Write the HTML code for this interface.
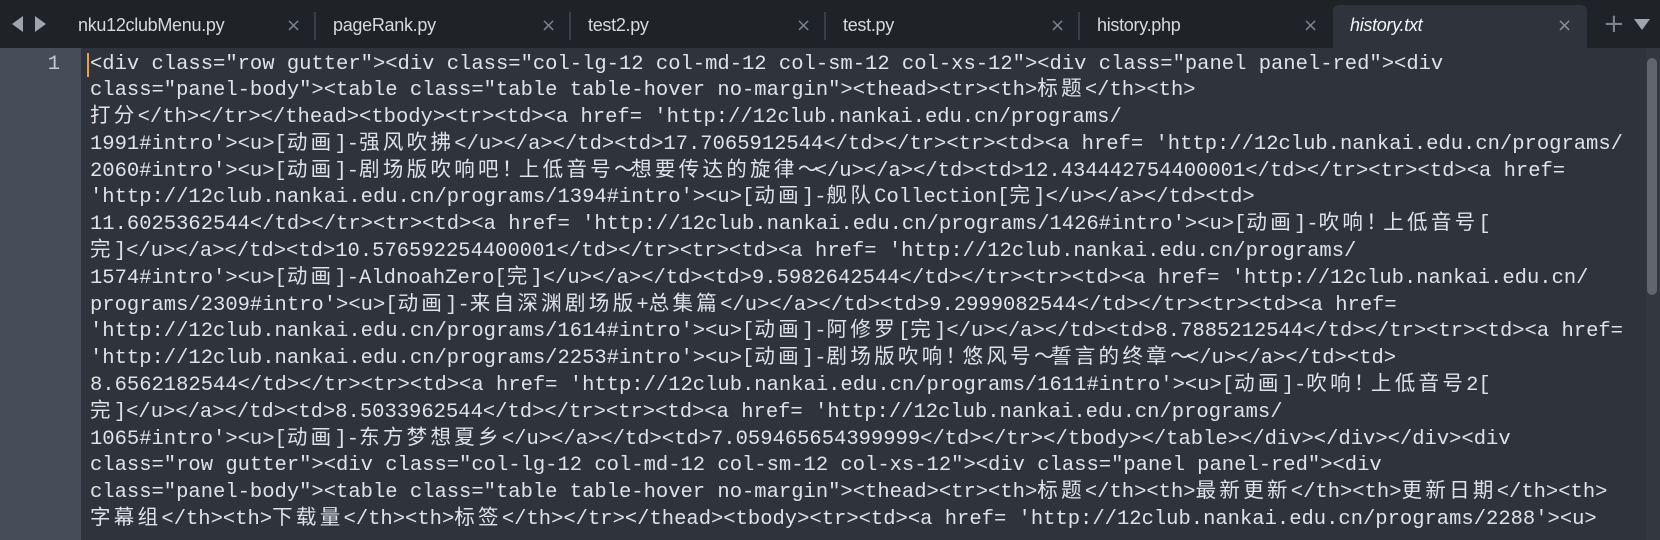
<!DOCTYPE html>
<html><head><meta charset="utf-8"><style>
html,body{margin:0;padding:0;width:1660px;height:540px;overflow:hidden;background:#2f343c}
.tabbar{position:absolute;left:0;top:0;width:1660px;height:48px;background:#1f2226}
.tab{position:absolute;top:0;height:48px;font-family:"Liberation Sans",sans-serif;font-size:18px;color:#d6d9dd;line-height:50px;letter-spacing:-0.3px}
.sep{position:absolute;top:12px;width:2px;height:28px;background:#3a3f45}
.x{position:absolute;top:0;font-family:"DejaVu Sans",sans-serif;font-size:18px;color:#7d838a;line-height:52px}
.active{position:absolute;left:1333px;top:5px;width:254px;height:43px;background:#2f343c;border-radius:6px 6px 0 0}
.gutter{position:absolute;left:0;top:48px;width:81px;height:492px;background:#454e58}
.ln{position:absolute;left:0;top:51px;width:60px;text-align:right;font-family:"Liberation Mono",monospace;font-size:20.5px;color:#c4c9cf;line-height:27px}
.code{position:absolute;left:90px;top:51.5px;font-family:"Liberation Mono","Noto Sans CJK SC",monospace;font-size:20.5px;line-height:26.8px;color:#dfe3e8;white-space:pre}
.code b{font-weight:normal;font-family:"Noto Sans CJK SC",sans-serif;letter-spacing:3.3px;line-height:0}
.code b i{font-style:normal;letter-spacing:0;display:inline-block;width:17px;text-align:center;line-height:0}
.caret{position:absolute;left:87px;top:53px;width:2px;height:24px;background:#f0a33a}
.track{position:absolute;left:1646px;top:48px;width:14px;height:492px;background:#333840}
.thumb{position:absolute;left:1647px;top:58px;width:10px;height:237px;background:#5f666f;border-radius:5px}
</style></head><body>
<div class="tabbar">
<svg style="position:absolute;left:12px;top:15px" width="36" height="18"><polygon points="0,9 11,1 11,17" fill="#a0a5ab"/><polygon points="23,1 34,9 23,17" fill="#a0a5ab"/></svg>
<div class="tab" style="left:78px">nku12clubMenu.py</div><div class="x" style="left:286px">×</div><div class="sep" style="left:314px"></div>
<div class="tab" style="left:333px">pageRank.py</div><div class="x" style="left:541px">×</div><div class="sep" style="left:569px"></div>
<div class="tab" style="left:588px">test2.py</div><div class="x" style="left:796px">×</div><div class="sep" style="left:824px"></div>
<div class="tab" style="left:843px">test.py</div><div class="x" style="left:1050px">×</div><div class="sep" style="left:1078px"></div>
<div class="tab" style="left:1097px">history.php</div><div class="x" style="left:1303px">×</div>
<div class="active"></div>
<div class="tab" style="left:1350px;color:#f2f4f6;font-style:italic">history.txt</div><div class="x" style="left:1557px;color:#8a9098">×</div>
<div class="x" style="left:1603px;font-size:26px;color:#7d838a;top:-2px">+</div>
<svg style="position:absolute;left:1634px;top:19px" width="16" height="12"><polygon points="0,0 16,0 8,11" fill="#a0a5ab"/></svg>
</div>
<div class="gutter"></div>
<div class="ln">1</div>
<div class="caret"></div>
<div class="code">&lt;div class="row gutter"&gt;&lt;div class="col-lg-12 col-md-12 col-sm-12 col-xs-12"&gt;&lt;div class="panel panel-red"&gt;&lt;div
class="panel-body"&gt;&lt;table class="table table-hover no-margin"&gt;&lt;thead&gt;&lt;tr&gt;&lt;th&gt;<b>标题</b>&lt;/th&gt;&lt;th&gt;
<b>打分</b>&lt;/th&gt;&lt;/tr&gt;&lt;/thead&gt;&lt;tbody&gt;&lt;tr&gt;&lt;td&gt;&lt;a href= 'http://12club.nankai.edu.cn/programs/
1991#intro'&gt;&lt;u&gt;[<b>动画</b>]-<b>强风吹拂</b>&lt;/u&gt;&lt;/a&gt;&lt;/td&gt;&lt;td&gt;17.7065912544&lt;/td&gt;&lt;/tr&gt;&lt;tr&gt;&lt;td&gt;&lt;a href= 'http://12club.nankai.edu.cn/programs/
2060#intro'&gt;&lt;u&gt;[<b>动画</b>]-<b>剧场版吹响吧<i>！</i>上低音号<i>～</i>想要传达的旋律<i>～</i></b>&lt;/u&gt;&lt;/a&gt;&lt;/td&gt;&lt;td&gt;12.434442754400001&lt;/td&gt;&lt;/tr&gt;&lt;tr&gt;&lt;td&gt;&lt;a href=
'http://12club.nankai.edu.cn/programs/1394#intro'&gt;&lt;u&gt;[<b>动画</b>]-<b>舰队</b>Collection[<b>完</b>]&lt;/u&gt;&lt;/a&gt;&lt;/td&gt;&lt;td&gt;
11.6025362544&lt;/td&gt;&lt;/tr&gt;&lt;tr&gt;&lt;td&gt;&lt;a href= 'http://12club.nankai.edu.cn/programs/1426#intro'&gt;&lt;u&gt;[<b>动画</b>]-<b>吹响<i>！</i>上低音号</b>[
<b>完</b>]&lt;/u&gt;&lt;/a&gt;&lt;/td&gt;&lt;td&gt;10.576592254400001&lt;/td&gt;&lt;/tr&gt;&lt;tr&gt;&lt;td&gt;&lt;a href= 'http://12club.nankai.edu.cn/programs/
1574#intro'&gt;&lt;u&gt;[<b>动画</b>]-AldnoahZero[<b>完</b>]&lt;/u&gt;&lt;/a&gt;&lt;/td&gt;&lt;td&gt;9.5982642544&lt;/td&gt;&lt;/tr&gt;&lt;tr&gt;&lt;td&gt;&lt;a href= 'http://12club.nankai.edu.cn/
programs/2309#intro'&gt;&lt;u&gt;[<b>动画</b>]-<b>来自深渊剧场版</b>+<b>总集篇</b>&lt;/u&gt;&lt;/a&gt;&lt;/td&gt;&lt;td&gt;9.2999082544&lt;/td&gt;&lt;/tr&gt;&lt;tr&gt;&lt;td&gt;&lt;a href=
'http://12club.nankai.edu.cn/programs/1614#intro'&gt;&lt;u&gt;[<b>动画</b>]-<b>阿修罗</b>[<b>完</b>]&lt;/u&gt;&lt;/a&gt;&lt;/td&gt;&lt;td&gt;8.7885212544&lt;/td&gt;&lt;/tr&gt;&lt;tr&gt;&lt;td&gt;&lt;a href=
'http://12club.nankai.edu.cn/programs/2253#intro'&gt;&lt;u&gt;[<b>动画</b>]-<b>剧场版吹响<i>！</i>悠风号<i>～</i>誓言的终章<i>～</i></b>&lt;/u&gt;&lt;/a&gt;&lt;/td&gt;&lt;td&gt;
8.6562182544&lt;/td&gt;&lt;/tr&gt;&lt;tr&gt;&lt;td&gt;&lt;a href= 'http://12club.nankai.edu.cn/programs/1611#intro'&gt;&lt;u&gt;[<b>动画</b>]-<b>吹响<i>！</i>上低音号</b>2[
<b>完</b>]&lt;/u&gt;&lt;/a&gt;&lt;/td&gt;&lt;td&gt;8.5033962544&lt;/td&gt;&lt;/tr&gt;&lt;tr&gt;&lt;td&gt;&lt;a href= 'http://12club.nankai.edu.cn/programs/
1065#intro'&gt;&lt;u&gt;[<b>动画</b>]-<b>东方梦想夏乡</b>&lt;/u&gt;&lt;/a&gt;&lt;/td&gt;&lt;td&gt;7.059465654399999&lt;/td&gt;&lt;/tr&gt;&lt;/tbody&gt;&lt;/table&gt;&lt;/div&gt;&lt;/div&gt;&lt;/div&gt;&lt;div
class="row gutter"&gt;&lt;div class="col-lg-12 col-md-12 col-sm-12 col-xs-12"&gt;&lt;div class="panel panel-red"&gt;&lt;div
class="panel-body"&gt;&lt;table class="table table-hover no-margin"&gt;&lt;thead&gt;&lt;tr&gt;&lt;th&gt;<b>标题</b>&lt;/th&gt;&lt;th&gt;<b>最新更新</b>&lt;/th&gt;&lt;th&gt;<b>更新日期</b>&lt;/th&gt;&lt;th&gt;
<b>字幕组</b>&lt;/th&gt;&lt;th&gt;<b>下载量</b>&lt;/th&gt;&lt;th&gt;<b>标签</b>&lt;/th&gt;&lt;/tr&gt;&lt;/thead&gt;&lt;tbody&gt;&lt;tr&gt;&lt;td&gt;&lt;a href= 'http://12club.nankai.edu.cn/programs/2288'&gt;&lt;u&gt;</div>
<div class="track"></div>
<div class="thumb"></div>
</body></html>
